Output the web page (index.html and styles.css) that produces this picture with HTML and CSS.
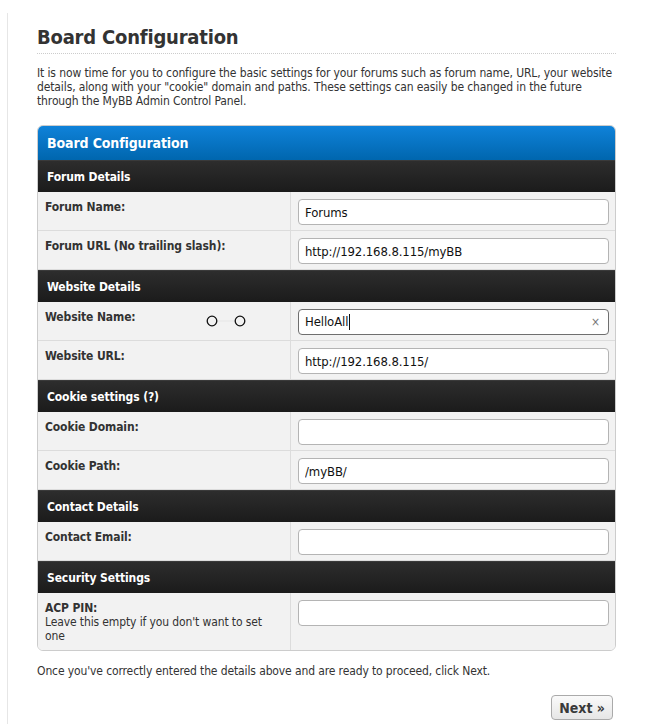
FILE: index.html
```html
<!DOCTYPE html>
<html lang="en">
<head>
<meta charset="utf-8">
<title>Board Configuration</title>
<link rel="stylesheet" href="styles.css">
</head>
<body>
<div class="page">
  <h2 class="title">Board Configuration</h2>
  <p class="intro">It is now time for you to configure the basic settings for your forums such as forum name, URL, your website details, along with your "cookie" domain and paths. These settings can easily be changed in the future through the MyBB Admin Control Panel.</p>

  <div class="box">
    <div class="box-head">Board Configuration</div>

    <div class="section">Forum Details</div>
    <div class="row">
      <div class="label">Forum Name:</div>
      <div class="value"><input class="field" type="text" value="Forums"></div>
    </div>
    <div class="row">
      <div class="label">Forum URL (No trailing slash):</div>
      <div class="value"><input class="field" type="text" value="http://192.168.8.115/myBB"></div>
    </div>

    <div class="section">Website Details</div>
    <div class="row">
      <div class="label">Website Name:
        <svg class="dots" width="44" height="14" viewBox="0 0 44 14"><line x1="13" y1="7" x2="31" y2="7" stroke="#e6e6e6" stroke-width="1"/><circle cx="8" cy="7" r="4.8" fill="none" stroke="#111" stroke-width="1.3"/><circle cx="36" cy="7" r="4.8" fill="none" stroke="#111" stroke-width="1.3"/></svg>
      </div>
      <div class="value">
        <div class="field focused"><span class="typed">HelloAll</span><span class="caret"></span><span class="clear">×</span></div>
      </div>
    </div>
    <div class="row">
      <div class="label">Website URL:</div>
      <div class="value"><input class="field" type="text" value="http://192.168.8.115/"></div>
    </div>

    <div class="section">Cookie settings (?)</div>
    <div class="row">
      <div class="label">Cookie Domain:</div>
      <div class="value"><input class="field" type="text" value=""></div>
    </div>
    <div class="row">
      <div class="label">Cookie Path:</div>
      <div class="value"><input class="field" type="text" value="/myBB/"></div>
    </div>

    <div class="section">Contact Details</div>
    <div class="row">
      <div class="label">Contact Email:</div>
      <div class="value"><input class="field" type="text" value=""></div>
    </div>

    <div class="section">Security Settings</div>
    <div class="row last">
      <div class="label">ACP PIN:<span class="hint">Leave this empty if you don't want to set one</span></div>
      <div class="value"><input class="field" type="password" value=""></div>
    </div>
  </div>

  <p class="outro">Once you've correctly entered the details above and are ready to proceed, click Next.</p>
  <div class="actions"><button class="next" type="button">Next »</button></div>
</div>
</body>
</html>
```

FILE: styles.css
```css
html, body {
  margin: 0;
  padding: 0;
  background: #fff;
}
body {
  font-family: "DejaVu Sans Condensed", "DejaVu Sans", sans-serif;
  font-stretch: condensed;
  font-size: 12px;
  line-height: 14px;
  letter-spacing: -0.12px;
  color: #333;
}
.page {
  margin: 13px 0 0 7px;
  border-left: 1px solid #e6e6e6;
  padding: 12px 0 0 29px;
  width: 579px;
  min-height: 720px;
}
.title {
  margin: 0;
  font-size: 20px;
  line-height: 24px;
  font-weight: bold;
  color: #333;
  letter-spacing: -0.2px;
  padding-bottom: 4px;
  border-bottom: 1px dotted #ccc;
}
.intro {
  margin: 12px 0 0;
}
.box {
  margin-top: 17px;
  border: 1px solid #ccc;
  border-radius: 6px;
  overflow: hidden;
}
.box-head {
  height: 34px;
  line-height: 34px;
  padding-left: 9px;
  background: linear-gradient(#0f82d9, #0066ae);
  color: #fff;
  font-weight: bold;
  font-size: 14px;
}
.section {
  height: 32px;
  line-height: 32px;
  padding-left: 9px;
  background: linear-gradient(#2d2d2d, #1b1b1b);
  border-top: 1px solid #3a3a3a;
  box-sizing: border-box;
  color: #fff;
  font-weight: bold;
}
.row {
  display: grid;
  grid-template-columns: 253px 1fr;
  background: #f2f2f2;
  border-bottom: 1px solid #dcdcdc;
}
.row.last {
  border-bottom: 0;
}
.label {
  position: relative;
  padding: 8px 7px 7px;
  border-right: 1px solid #dcdcdc;
  font-weight: bold;
}
.hint {
  display: block;
  font-weight: normal;
}
.dots {
  position: absolute;
  left: 166px;
  top: 12px;
}
.value {
  padding: 7px 6px 5px 7px;
}
.field {
  display: block;
  box-sizing: border-box;
  width: 100%;
  height: 26px;
  margin: 0;
  padding: 0 6px;
  border: 1px solid #b4b4b4;
  border-radius: 4px;
  background: #fff;
  font-family: "DejaVu Sans Condensed", "DejaVu Sans", sans-serif;
  font-stretch: condensed;
  font-size: 13px;
  letter-spacing: -0.1px;
  color: #111;
  outline: none;
}
.field.focused {
  display: flex;
  align-items: center;
  border-color: #6f6f6f;
}
.caret {
  width: 1px;
  height: 16px;
  background: #111;
  margin-left: 1px;
}
.clear {
  margin-left: auto;
  margin-right: 2px;
  color: #777;
  font-size: 12px;
}
.outro {
  margin: 13px 0 0;
}
.actions {
  display: flex;
  justify-content: flex-end;
  padding-right: 3px;
  margin-top: 17px;
}
.next {
  height: 25px;
  padding: 0 7px;
  border: 1px solid #aaa;
  border-radius: 4px;
  background: linear-gradient(#fafafa, #e6e6e6);
  font-family: "DejaVu Sans Condensed", "DejaVu Sans", sans-serif;
  font-stretch: condensed;
  font-weight: bold;
  font-size: 14px;
  color: #3a3a3a;
}
```
